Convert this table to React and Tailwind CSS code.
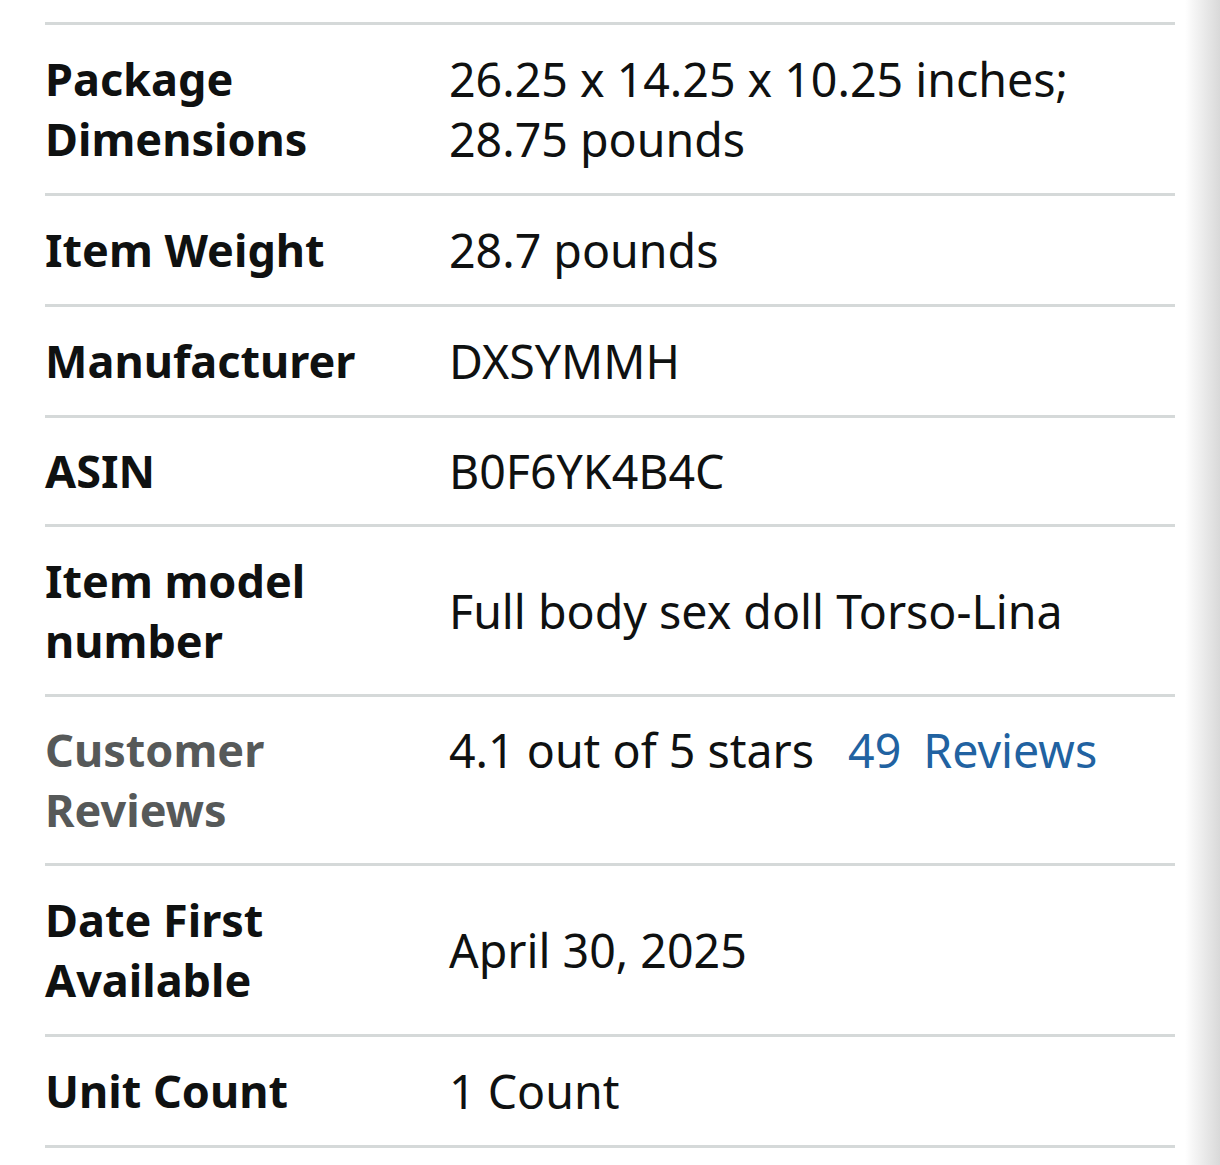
import React from 'react';

const rows = [
  { label: 'Package Dimensions', value: '26.25 x 14.25 x 10.25 inches; 28.75 pounds', pad: 'py-[24px]' },
  { label: 'Item Weight', value: '28.7 pounds', pad: 'py-[24px]' },
  { label: 'Manufacturer', value: 'DXSYMMH', pad: 'py-[24px]' },
  { label: 'ASIN', value: 'B0F6YK4B4C', pad: 'py-[23px]' },
  { label: 'Item model number', value: 'Full body sex doll Torso-Lina', pad: 'pt-[24px] pb-[23px]' },
  { label: 'Customer Reviews', reviews: true, pad: 'py-[23px]' },
  { label: 'Date First Available', value: 'April 30, 2025', pad: 'py-[24px]' },
  { label: 'Unit Count', value: '1 Count', pad: 'py-[24px]' },
];

const App = () => {
  return (
    <div className="flex min-h-[1165px] bg-white" style={{ fontFamily: '"Noto Sans", "Open Sans", sans-serif' }}>
      <main className="flex-1 pl-[45px] pr-[10px] pt-[22px]">
        <div className="border-b-[3px] border-[#d5d9d9]">
          {rows.map((row) => (
            <div key={row.label} className={'flex border-t-[3px] border-[#d5d9d9] ' + row.pad}>
              <div
                className={
                  'w-[404px] shrink-0 pr-[42px] text-[45px] font-bold leading-[60px] ' +
                  (row.reviews ? 'text-[#565959]' : 'text-[#0f1111]')
                }
              >
                {row.label}
              </div>
              <div
                className={
                  'flex-1 pr-[40px] text-[46.5px] leading-[60px] text-[#0f1111] ' +
                  (row.reviews ? 'self-start' : 'self-center')
                }
              >
                {row.reviews ? (
                  <>
                    <span>4.1 out of 5 stars</span>
                    <span className="ml-[34px] text-[#2162a1]">49</span>
                    <span className="ml-[22px] text-[#2162a1]">Reviews</span>
                  </>
                ) : (
                  row.value
                )}
              </div>
            </div>
          ))}
        </div>
      </main>
      {/* scroll edge shadow */}
      <div className="w-[35px] shrink-0 bg-gradient-to-r from-white to-[#d9d9d9]" />
    </div>
  );
};

export default App;
